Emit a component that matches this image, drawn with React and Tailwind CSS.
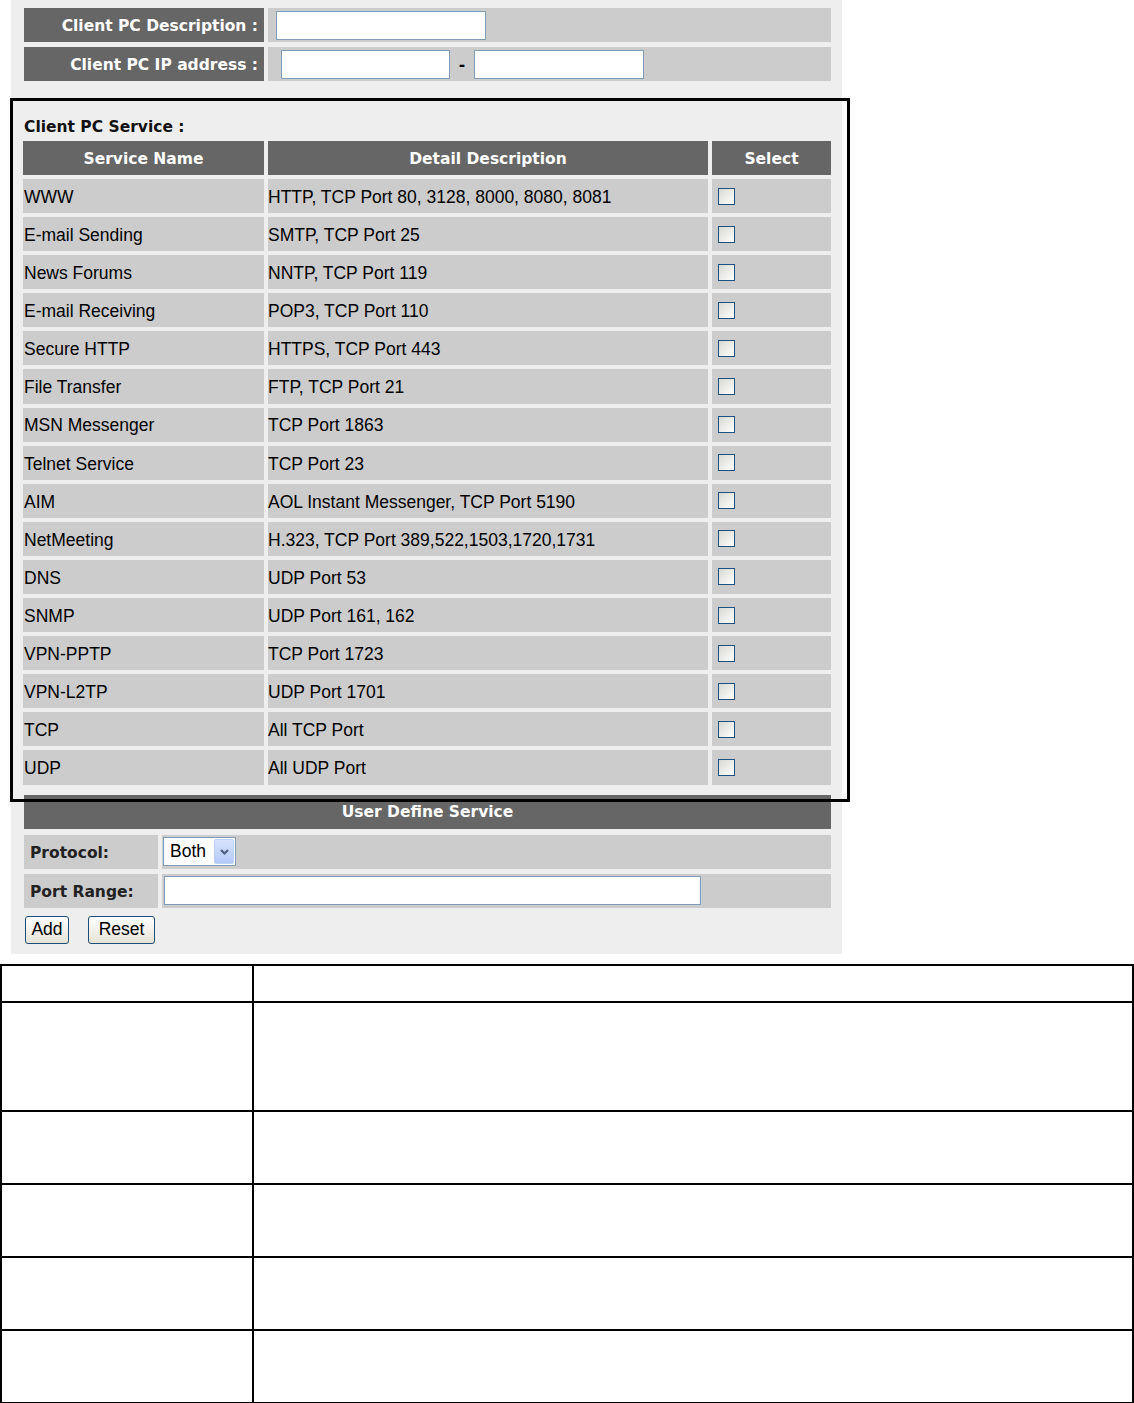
import React from "react";

const rows = [
  ["WWW", "HTTP, TCP Port 80, 3128, 8000, 8080, 8081"],
  ["E-mail Sending", "SMTP, TCP Port 25"],
  ["News Forums", "NNTP, TCP Port 119"],
  ["E-mail Receiving", "POP3, TCP Port 110"],
  ["Secure HTTP", "HTTPS, TCP Port 443"],
  ["File Transfer", "FTP, TCP Port 21"],
  ["MSN Messenger", "TCP Port 1863"],
  ["Telnet Service", "TCP Port 23"],
  ["AIM", "AOL Instant Messenger, TCP Port 5190"],
  ["NetMeeting", "H.323, TCP Port 389,522,1503,1720,1731"],
  ["DNS", "UDP Port 53"],
  ["SNMP", "UDP Port 161, 162"],
  ["VPN-PPTP", "TCP Port 1723"],
  ["VPN-L2TP", "UDP Port 1701"],
  ["TCP", "All TCP Port"],
  ["UDP", "All UDP Port"],
];

const reg = "font-['Liberation_Sans',Arial,sans-serif] text-[17.5px]";
const bold = "font-['DejaVu_Sans',Verdana,sans-serif] font-bold text-[15.5px]";

function Input({ className }) {
  return <div className={"h-[29px] bg-white border border-[#7f9db9] " + className} />;
}

function Checkbox() {
  return (
    <div className="w-[17px] h-[17px] border border-[#1c5180] bg-linear-to-br from-[#d8d8d2] to-white" />
  );
}

function Btn({ children, className }) {
  return (
    <div
      className={
        "h-[28px] flex items-center justify-center border border-[#1f4d7a] rounded-[3px] bg-linear-to-b from-white to-[#e6e3d6] text-black " +
        reg +
        " " +
        className
      }
    >
      {children}
    </div>
  );
}

export default function App() {
  return (
    <div className="relative w-[1134px] bg-white text-black">
      {/* gray panel */}
      <div className="ml-[11px] w-[831px] bg-[#eeeeee] pt-[8px] pl-[12px] pr-[11px] pb-[10px]">
        {/* Client PC Description */}
        <div className="flex gap-[4px] h-[34px] ml-px">
          <div className={"w-[240px] bg-[#666666] text-white flex items-center justify-end pr-[6px] pt-[4px] " + bold}>
            Client PC Description :
          </div>
          <div className="flex-1 bg-[#cccccc] flex items-center pl-[8px]">
            <Input className="w-[210px]" />
          </div>
        </div>
        {/* Client PC IP address */}
        <div className="flex gap-[4px] h-[34px] ml-px mt-[5px]">
          <div className={"w-[240px] bg-[#666666] text-white flex items-center justify-end pr-[6px] pt-[4px] " + bold}>
            Client PC IP address :
          </div>
          <div className="flex-1 bg-[#cccccc] flex items-center pl-[13px]">
            <Input className="w-[169px]" />
            <span className={"w-[24px] text-center pt-[4px] " + bold}>-</span>
            <Input className="w-[170px]" />
          </div>
        </div>

        {/* Client PC Service */}
        <div className={"mt-[36px] h-[20px] leading-[20px] ml-px text-[#111] " + bold}>Client PC Service :</div>

        <div className="mt-[4px] grid grid-cols-[241px_440px_119px] gap-x-[4px] gap-y-[4px]">
          <div className={"h-[34px] bg-[#666666] text-white flex items-center justify-center pt-[4px] " + bold}>Service Name</div>
          <div className={"h-[34px] bg-[#666666] text-white flex items-center justify-center pt-[4px] " + bold}>Detail Description</div>
          <div className={"h-[34px] bg-[#666666] text-white flex items-center justify-center pt-[4px] " + bold}>Select</div>
          {rows.map(([name, desc]) => (
            <React.Fragment key={name}>
              <div className={"h-[34.1px] bg-[#cccccc] flex items-center pl-px pt-[2px] whitespace-nowrap " + reg}>{name}</div>
              <div className={"h-[34.1px] bg-[#cccccc] flex items-center pt-[2px] whitespace-nowrap " + reg}>{desc}</div>
              <div className="h-[34.1px] bg-[#cccccc] flex items-center pl-[6px]">
                <Checkbox />
              </div>
            </React.Fragment>
          ))}
        </div>

        {/* User Define Service */}
        <div className={"mt-[10px] ml-px h-[34px] bg-[#666666] text-white flex items-center justify-center pt-[3px] " + bold}>
          User Define Service
        </div>
        <div className="mt-[6px] ml-px flex gap-[4px] h-[34px]">
          <div className={"w-[134px] bg-[#cccccc] flex items-center pl-[6px] pt-[4px] text-[#222] " + bold}>Protocol:</div>
          <div className="flex-1 bg-[#cccccc] flex items-center pl-[1px]">
            <div className="w-[73px] h-[29px] bg-white border border-[#7f9db9] flex items-center justify-between pl-[6px] pr-px">
              <span className={reg}>Both</span>
              <div className="w-[20px] h-[25px] rounded-[2px] bg-linear-to-b from-[#d8e3fc] to-[#b5c9f7] border border-[#bcd0f8] flex items-center justify-center">
                <svg width="11" height="8" viewBox="0 0 11 8">
                  <polyline points="2,2 5.5,5.5 9,2" fill="none" stroke="#4d6185" strokeWidth="2.2" />
                </svg>
              </div>
            </div>
          </div>
        </div>
        <div className="mt-[5px] ml-px flex gap-[4px] h-[34px]">
          <div className={"w-[134px] bg-[#cccccc] flex items-center pl-[6px] pt-[4px] text-[#222] " + bold}>Port Range:</div>
          <div className="flex-1 bg-[#cccccc] flex items-center pl-[2px]">
            <Input className="w-[537px]" />
          </div>
        </div>
        <div className="mt-[8px] ml-[2px] flex gap-[19px]">
          <Btn className="w-[44px]">Add</Btn>
          <Btn className="w-[67px]">Reset</Btn>
        </div>
      </div>

      {/* annotation box */}
      <div className="absolute left-[10px] top-[98px] w-[840px] h-[704px] border-[3px] border-black pointer-events-none" />

      {/* bottom empty table */}
      <div className="mt-[10px] w-[1134px] grid grid-cols-[252px_880px] border-l-2 border-t-2 border-black">
        {[37, 109, 73, 73, 73, 73].map((h, i) => (
          <React.Fragment key={i}>
            <div className="border-r-2 border-b-2 border-black" style={{ height: h }} />
            <div className="border-r-2 border-b-2 border-black" style={{ height: h }} />
          </React.Fragment>
        ))}
      </div>
    </div>
  );
}
